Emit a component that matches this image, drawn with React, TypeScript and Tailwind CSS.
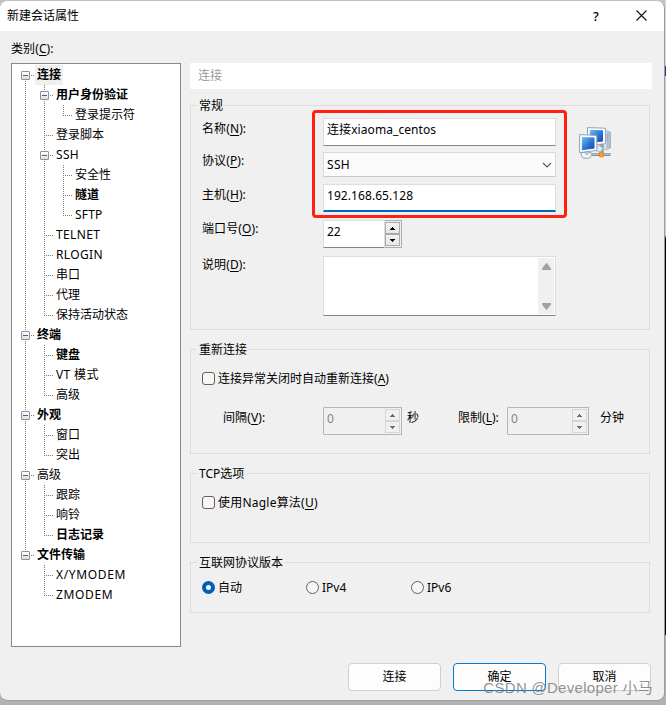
import type { ReactNode } from "react";

type Guide = "none" | "pass" | "tee" | "end" | "first";

type Row = { text: string; guides: Guide[]; box?: boolean; bold?: boolean; selected?: boolean; tracking?: string };

const rows: Row[] = [
  { text: "连接", guides: ["first"], box: true, bold: true, selected: true },
  { text: "用户身份验证", guides: ["pass", "tee"], box: true, bold: true },
  { text: "登录提示符", guides: ["pass", "pass", "end"] },
  { text: "登录脚本", guides: ["pass", "tee"] },
  { text: "SSH", guides: ["pass", "tee"], box: true, tracking: "tracking-[0.3px]" },
  { text: "安全性", guides: ["pass", "pass", "tee"] },
  { text: "隧道", guides: ["pass", "pass", "tee"], bold: true },
  { text: "SFTP", guides: ["pass", "pass", "end"], tracking: "tracking-[0.2px]" },
  { text: "TELNET", guides: ["pass", "tee"], tracking: "tracking-[0.35px]" },
  { text: "RLOGIN", guides: ["pass", "tee"], tracking: "tracking-[0.35px]" },
  { text: "串口", guides: ["pass", "tee"] },
  { text: "代理", guides: ["pass", "tee"] },
  { text: "保持活动状态", guides: ["pass", "end"] },
  { text: "终端", guides: ["tee"], box: true, bold: true },
  { text: "键盘", guides: ["pass", "tee"], bold: true },
  { text: "VT 模式", guides: ["pass", "tee"], tracking: "tracking-[0.35px]" },
  { text: "高级", guides: ["pass", "end"] },
  { text: "外观", guides: ["tee"], box: true, bold: true },
  { text: "窗口", guides: ["pass", "tee"] },
  { text: "突出", guides: ["pass", "end"] },
  { text: "高级", guides: ["tee"], box: true },
  { text: "跟踪", guides: ["pass", "tee"] },
  { text: "响铃", guides: ["pass", "tee"] },
  { text: "日志记录", guides: ["pass", "end"], bold: true },
  { text: "文件传输", guides: ["end"], box: true, bold: true },
  { text: "X/YMODEM", guides: ["none", "tee"], tracking: "tracking-[0.65px]" },
  { text: "ZMODEM", guides: ["none", "end"], tracking: "tracking-[0.65px]" },
];

const vDots = "w-px shrink-0 bg-[repeating-linear-gradient(to_bottom,#808080_0_1px,transparent_1px_2px)]";
const hDots = "h-px mt-[10px] bg-[repeating-linear-gradient(to_right,transparent_0_1px,#808080_1px_2px)]";

function GuideCell({ kind, box }: { kind: Guide; box: boolean }) {
  const joined = kind === "tee" || kind === "end" || kind === "first";
  const span = kind === "end" ? "h-[11px]" : kind === "first" ? "mt-[10px] h-[10px]" : "h-5";
  return (
    <span className="relative flex h-5 w-[19px] shrink-0 pl-[9px]">
      {kind !== "none" && <span className={`${vDots} ${span}`} />}
      {joined && <span className={`${hDots} w-[8px]`} />}
      {box && (
        <span className="absolute top-[6px] left-[5px] flex size-[9px] items-center justify-center rounded-[1px] border border-[#919191] bg-linear-to-b from-white to-[#e0e0e0]">
          <span className="h-px w-[5px] bg-[#3f5fa8]" />
        </span>
      )}
    </span>
  );
}

function Tree() {
  return (
    <div className="h-[584px] w-[170px] border border-[#828790] bg-white pt-px pl-[4px]">
      {rows.map((r, i) => (
        <div key={i} className="flex h-5">
          {r.guides.map((g, j) => (
            <GuideCell key={j} kind={g} box={!!r.box && j === r.guides.length - 1} />
          ))}
          <span
            className={`h-5 px-[2px] leading-[19px] ${r.bold ? "font-bold" : ""} ${r.selected ? "bg-[#f0f0f0]" : ""} ${r.tracking ?? ""}`}
          >
            {r.text}
          </span>
        </div>
      ))}
    </div>
  );
}

function Key({ text, k }: { text: string; k: string }) {
  return (
    <>
      {text}(<span className="underline underline-offset-2">{k}</span>)
    </>
  );
}

function Group({ title, className, children }: { title: string; className: string; children: ReactNode }) {
  return (
    <fieldset className={`w-[460px] border border-[#dcdcdc] pl-[11px] ${className}`}>
      <legend className="-ml-[5px] h-[17px] px-[2px] leading-[17px]">{title}</legend>
      {children}
    </fieldset>
  );
}

function Field({
  label,
  k,
  className,
  raised,
  children,
}: {
  label: string;
  k: string;
  className?: string;
  raised?: boolean;
  children: ReactNode;
}) {
  return (
    <div className={`flex ${className ?? ""}`}>
      <span className={`w-[121px] tracking-[0.1px] ${raised ? "leading-[18px]" : "leading-[22px]"}`}>
        <Key text={label} k={k} />:
      </span>
      {children}
    </div>
  );
}

function Arrow({ up, color }: { up?: boolean; color: string }) {
  return (
    <svg width="5" height="3" viewBox="0 0 5 3" fill={color} shapeRendering="crispEdges">
      {up ? <path d="M2 0h1v1h1v1h1v1H0V2h1V1h1z" /> : <path d="M0 0h5v1H4v1H3v1H2V2H1V1H0z" />}
    </svg>
  );
}

function Spinner({ value, disabled, className }: { value: string; disabled?: boolean; className: string }) {
  return (
    <div
      className={`flex h-7 justify-between ${className} ${
        disabled
          ? "rounded-[1px] border border-[#b4b5ba] bg-[#f0f0f0] text-[#848484]"
          : "border border-[#dedede] border-b-[#858585] bg-white"
      }`}
    >
      <span className="pl-[3px] leading-[21px]">{value}</span>
      <span
        className={`-my-px -mr-px flex w-[18px] flex-col border p-px ${
          disabled ? "border-[#b4b5ba] border-l-transparent" : "border-[#abadb3] border-l-[#dedede] bg-[#f0f0f0]"
        }`}
      >
        {[true, false].map((up) => (
          <span
            key={String(up)}
            className={`flex w-[15px] flex-1 -ml-px items-center justify-center border ${
              disabled ? "border-[#d6d6d6]" : "border-[#aaaaaa] bg-linear-to-b from-[#f3f3f3] to-[#e6e6e6]"
            }`}
          >
            <Arrow up={up} color={disabled ? "#6d6d6d" : "#000"} />
          </span>
        ))}
      </span>
    </div>
  );
}

function Check({ children }: { children: ReactNode }) {
  return (
    <div className="flex items-center gap-[3px]">
      <span className="size-[13px] rounded-[3px] border border-[#626262] bg-[#f6f6f6]" />
      <span className="leading-[17px]">{children}</span>
    </div>
  );
}

function Radio({ label, on, className }: { label: string; on?: boolean; className?: string }) {
  return (
    <div className={`flex items-center gap-[3px] ${className ?? ""}`}>
      <span
        className={`size-[13px] rounded-full ${
          on ? "border-4 border-[#005fb8] bg-white" : "border border-[#626262] bg-[#f6f6f6]"
        }`}
      />
      <span className="leading-[17px]">{label}</span>
    </div>
  );
}

function NetworkIcon() {
  return (
    <svg width="32" height="32" viewBox="0 0 32 32" className="mt-[9px] ml-[23px]">
      <defs>
        <linearGradient id="scr" x1="0" y1="0" x2="1" y2="1">
          <stop offset="0" stopColor="#6fc4f4" />
          <stop offset="0.5" stopColor="#2f7ad8" />
          <stop offset="1" stopColor="#1240b0" />
        </linearGradient>
        <linearGradient id="tower" x1="0" y1="0" x2="1" y2="0">
          <stop offset="0" stopColor="#eaf1f6" />
          <stop offset="1" stopColor="#a3b5c4" />
        </linearGradient>
      </defs>
      <path d="M24.5 4.2l4-.4 3 1.5v15.4l-4 2.3-3-1z" fill="url(#tower)" stroke="#93a7b7" strokeWidth=".7" />
      <path d="M28.3 6v15M25.5 8h4.5M25.5 10.5h4.5M25.5 13h4.5" stroke="#869dae" strokeWidth=".6" />
      <path d="M20.5 16l3.5-.5.8 10h-3.3z" fill="#8b9eac" />
      <path d="M16.5 21l4-2.5 3.5 2.5-2 4-5-1z" fill="#dfe8ee" stroke="#8fa4b3" strokeWidth=".6" />
      <path d="M8.5.6l17.9.6v15.5l-17.9 1.8z" fill="#fff" stroke="#8ea3b3" strokeWidth="1" />
      <path d="M10.8 2.8l13.2.4v11.3l-13.2 1.4z" fill="url(#scr)" />
      <path d="M13 27.6h18.5" stroke="#7d909f" strokeWidth="3" />
      <path d="M13 27.1h18" stroke="#cfdae2" strokeWidth="1" />
      <path d="M2.5 25.5c-1 3.5 1 6 5 5.8 4 .2 6-2.3 4.5-5.8z" fill="#f1f6f9" stroke="#8ca1b1" strokeWidth="1" />
      <path d="M6 23.5h4v3.8c-1 .8-3 .8-4 0z" fill="#b9c9d5" />
      <path d="M.6 7.6l17.2.8v15l-17.2 2.2z" fill="#fff" stroke="#8ea3b3" strokeWidth="1" />
      <path d="M2.9 9.9l12.6.7v10.9L2.9 23.2z" fill="url(#scr)" />
      <rect x="20.2" y="25.2" width="4.6" height="4.6" rx="1" fill="#f8a014" stroke="#c97a12" strokeWidth=".7" />
    </svg>
  );
}

export default function App() {
  return (
    <div className="relative flex h-[705px] w-[666px] overflow-hidden bg-[#b2b2b2] bg-linear-to-b from-[#c2c2c2] to-[#b2b2b2] font-['Noto_Sans','Noto_Sans_CJK_SC',sans-serif] text-[12px] text-black">
      <div className="mt-px h-[700px] w-[665px] overflow-hidden rounded-[8px] border-r border-b border-[#9c9c9c] bg-[#f0f0f0]">
        <header className="flex h-[30px] items-center bg-white pl-[7px]">
          <span className="flex-1 leading-[28px]">新建会话属性</span>
          <span className="w-[43px] text-[13px] leading-[26px] font-medium">?</span>
          <svg width="11" height="11" viewBox="0 0 11 11" className="mr-[17px] mb-[2px]" stroke="#111" strokeWidth="1.1">
            <path d="M.5.5l10 10M10.5.5l-10 10" />
          </svg>
        </header>

        <div className="h-[32px] pl-[11px] leading-[35px] tracking-[0.1px]">
          <Key text="类别" k="C" />:
        </div>

        <main className="flex gap-[9px] pl-[11px]">
          <Tree />
          <div className="flex flex-col">
            <div className="mb-[8px] h-[26px] w-[462px] bg-white pl-[8px] leading-[25px] text-[#9a9a9a]">连接</div>

            <Group title="常规" className="h-[233px]">
              <div className="flex pt-[4px]">
                <div className="relative">
                  <Field label="名称" k="N">
                    <div className="h-7 w-[233px] border border-[#dedede] border-b-[#858585] bg-white pl-[3px] leading-[22px] tracking-[0.08px]">
                      连接xiaoma_centos
                    </div>
                  </Field>
                  <Field label="协议" k="P" className="mt-[6px]" raised>
                    <div className="flex h-[25px] w-[233px] items-center justify-between rounded-[1px] border border-[#dadada] border-b-[#c8c8c8] bg-[#fbfbfb] pr-[3px] pl-[3px]">
                      <span className="leading-[22px] tracking-[0.3px]">SSH</span>
                      <svg width="10" height="6" viewBox="0 0 10 6" fill="none" stroke="#5c5c5c" strokeWidth="1.1">
                        <path d="M1 1l4 4 4-4" />
                      </svg>
                    </div>
                  </Field>
                  <Field label="主机" k="H" className="mt-[7px]">
                    <div className="h-7 w-[233px] border border-b-2 border-[#dedede] border-b-[#0067c0] bg-white pl-[3px] leading-[22px] tracking-[0.07px]">
                      192.168.65.128
                    </div>
                  </Field>
                  <Field label="端口号" k="O" className="mt-[8px]" raised>
                    <Spinner value="22" className="w-[79px]" />
                  </Field>
                  <Field label="说明" k="D" className="mt-[8px]" raised>
                    <div className="flex h-[60px] w-[233px] justify-end border border-[#dedede] border-b-[#858585] bg-white p-px">
                      <div className="flex w-4 flex-col items-center justify-between bg-[#f0f0f0] pt-[5px] pb-[4px]">
                        <svg width="9" height="7" viewBox="0 0 9 7" fill="#a3a3a3">
                          <path d="M4 .3h1L9 5.5V7H0V5.5z" />
                        </svg>
                        <svg width="9" height="7" viewBox="0 0 9 7" fill="#a3a3a3">
                          <path d="M4 6.7h1L9 1.5V0H0v1.5z" />
                        </svg>
                      </div>
                    </div>
                  </Field>
                  <div className="absolute -top-[8px] left-[110px] h-[108px] w-[255px] rounded-[4px] border-[3px] border-[#ff2012]" />
                </div>
                <NetworkIcon />
              </div>
            </Group>

            <Group title="重新连接" className="mt-[11px] h-[113px] pt-[12px]">
              <Check>
                <Key text="连接异常关闭时自动重新连接" k="A" />
              </Check>
              <div className="mt-[20px] flex pl-[21px] leading-[22px]">
                <span className="w-[100px] tracking-[0.1px]">
                  <Key text="间隔" k="V" />:
                </span>
                <Spinner value="0" disabled className="w-[79px]" />
                <span className="ml-[5px] w-[51px]">秒</span>
                <span className="w-[49px]">
                  <Key text="限制" k="L" />:
                </span>
                <Spinner value="0" disabled className="w-[82px]" />
                <span className="ml-[11px]">分钟</span>
              </div>
            </Group>

            <Group title="TCP选项" className="mt-[11px] h-[78px] pt-[12px]">
              <Check>
                <span className="tracking-[0.22px]">
                  <Key text="使用Nagle算法" k="U" />
                </span>
              </Check>
            </Group>

            <Group title="互联网协议版本" className="mt-[11px] h-[59px] pt-[8px]">
              <div className="flex">
                <Radio label="自动" on className="w-[104px]" />
                <Radio label="IPv4" className="w-[105px]" />
                <Radio label="IPv6" />
              </div>
            </Group>
          </div>
        </main>

        <footer className="mt-[16px] flex justify-end gap-[12px] pr-[13px]">
          {["连接", "确定", "取消"].map((t) => (
            <button
              key={t}
              className={`h-7 w-[93px] rounded-[4px] border bg-[#fdfdfd] pb-px ${
                t === "确定" ? "border-[#0078d4]" : "border-[#d0d0d0]"
              }`}
            >
              {t}
            </button>
          ))}
        </footer>
      </div>

      <div className="flex w-px flex-col">
        <span className="h-[66px] bg-[#d8d8d8]" />
        <span className="h-[10px] bg-[#3f2f6b]" />
        <span className="h-[160px] bg-[#cfcfcf]" />
        <span className="h-[2px] bg-[#1f6fb5]" />
        <span className="h-[397px] bg-black" />
      </div>

      <div className="absolute right-[13px] bottom-[7px] font-['Liberation_Sans','Noto_Sans_CJK_SC',sans-serif] text-[15px] leading-[20px] tracking-[0.29px] whitespace-nowrap text-[#7d7d7d]/85">
        CSDN @Developer 小马
      </div>
    </div>
  );
}
